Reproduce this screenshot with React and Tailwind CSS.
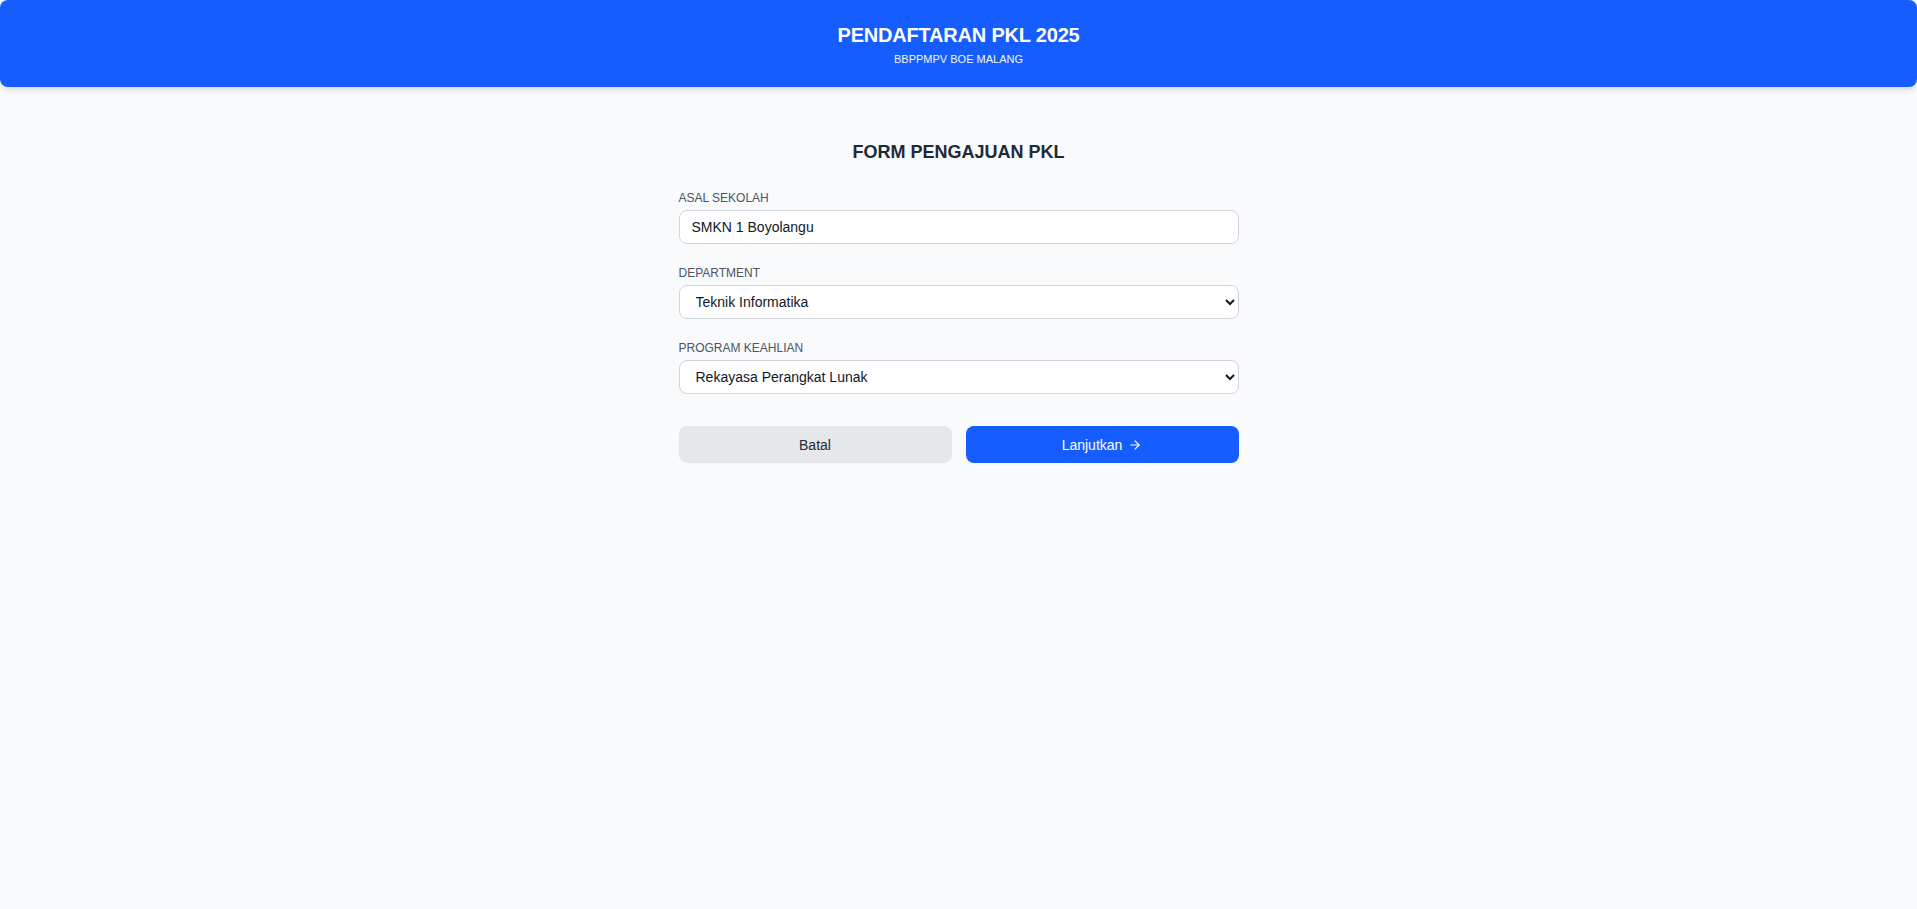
import { useState } from 'react';
import { ArrowRight } from 'lucide-react';

const departments = ['Teknik Informatika', 'Teknik Elektronika', 'Teknik Mesin'];
const programs = ['Rekayasa Perangkat Lunak', 'Teknik Komputer dan Jaringan', 'Multimedia'];

function Field({ label, children }) {
  return (
    <div>
      <label className="block text-xs font-medium text-gray-600 mb-1 leading-4">{label}</label>
      {children}
    </div>
  );
}

export default function App() {
  const [school, setSchool] = useState('SMKN 1 Boyolangu');
  const [dept, setDept] = useState(departments[0]);
  const [program, setProgram] = useState(programs[0]);

  return (
    <div className="min-h-screen bg-[#f8fafc] font-['Liberation_Sans',Arial,sans-serif]">
      {/* Header */}
      <header className="h-[87px] bg-[#165dff] rounded-lg shadow-md flex flex-col items-center justify-center text-white">
        <h1 className="text-xl font-bold leading-7 tracking-[-0.2px]">PENDAFTARAN PKL 2025</h1>
        <p className="text-[11px] leading-4 mt-0.5 text-blue-50">BBPPMPV BOE MALANG</p>
      </header>

      {/* Form */}
      <main className="w-[560px] mx-auto pt-[51px]">
        <h2 className="text-lg font-bold text-gray-800 text-center leading-7 mb-6">FORM PENGAJUAN PKL</h2>

        <div className="space-y-[21px]">
          <Field label="ASAL SEKOLAH">
            <input
              value={school}
              onChange={(e) => setSchool(e.target.value)}
              className="w-full h-[34px] px-3 text-sm text-gray-900 bg-white border border-gray-300 rounded-lg outline-none"
            />
          </Field>

          <Field label="DEPARTMENT">
            <select
              value={dept}
              onChange={(e) => setDept(e.target.value)}
              className="w-full h-[34px] px-3 text-sm text-gray-900 bg-white border border-gray-300 rounded-lg outline-none"
            >
              {departments.map((d) => (
                <option key={d}>{d}</option>
              ))}
            </select>
          </Field>

          <Field label="PROGRAM KEAHLIAN">
            <select
              value={program}
              onChange={(e) => setProgram(e.target.value)}
              className="w-full h-[34px] px-3 text-sm text-gray-900 bg-white border border-gray-300 rounded-lg outline-none"
            >
              {programs.map((p) => (
                <option key={p}>{p}</option>
              ))}
            </select>
          </Field>
        </div>

        <div className="flex gap-3.5 mt-8">
          <button className="flex-1 h-[37px] rounded-lg bg-gray-200 text-sm font-medium text-gray-800">
            Batal
          </button>
          <button className="flex-1 h-[37px] rounded-lg bg-[#165dff] text-sm font-medium text-white flex items-center justify-center gap-1.5">
            Lanjutkan
            <ArrowRight className="w-3.5 h-3.5" strokeWidth={2} />
          </button>
        </div>
      </main>
    </div>
  );
}
